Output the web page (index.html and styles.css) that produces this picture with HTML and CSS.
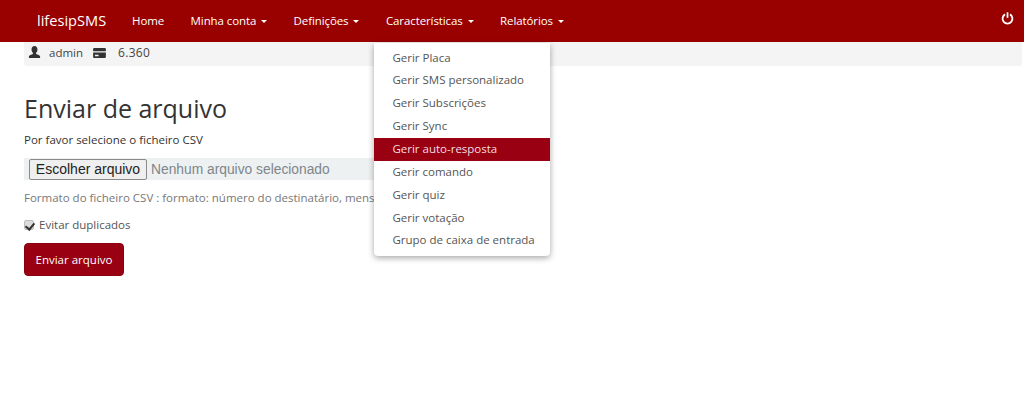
FILE: index.html
```html
<!DOCTYPE html>
<html lang="pt">
<head>
<meta charset="utf-8">
<title>Enviar de arquivo</title>
<link rel="stylesheet" href="styles.css">
</head>
<body>
<nav class="navbar">
  <a class="brand" href="#">lifesipSMS</a>
  <ul class="nav-list">
    <li><a href="#">Home</a></li>
    <li><a href="#">Minha conta <span class="caret"></span></a></li>
    <li><a href="#">Definições <span class="caret"></span></a></li>
    <li class="has-menu"><a href="#">Características <span class="caret"></span></a>
      <ul class="menu">
        <li><a href="#">Gerir Placa</a></li>
        <li><a href="#">Gerir SMS personalizado</a></li>
        <li><a href="#">Gerir Subscrições</a></li>
        <li><a href="#">Gerir Sync</a></li>
        <li><a class="active" href="#">Gerir auto-resposta</a></li>
        <li><a href="#">Gerir comando</a></li>
        <li><a href="#">Gerir quiz</a></li>
        <li><a href="#">Gerir votação</a></li>
        <li><a href="#">Grupo de caixa de entrada</a></li>
      </ul>
    </li>
    <li><a href="#">Relatórios <span class="caret"></span></a></li>
  </ul>
  <a class="power" href="#" aria-label="Sair">
    <svg viewBox="0 0 14 14" width="13" height="13"><path d="M4.300 2.600a5.300 5.300 0 1 0 5.400 0" fill="none" stroke="#fff" stroke-width="2"/><path d="M7 .3v6" fill="none" stroke="#fff" stroke-width="1.900"/></svg>
  </a>
</nav>
<main class="content">
  <div class="stats">
    <svg class="icon" viewBox="0 0 14 14" width="13" height="13"><path d="M7 0c2 0 3.200 1.500 3.200 3.700 0 1.500-.6 2.900-1.500 3.700v1.100c1.800.5 4.300 1.300 4.300 2.800V13H1v-1.700c0-1.500 2.500-2.300 4.300-2.800V7.400C4.400 6.600 3.800 5.200 3.800 3.700 3.800 1.500 5 0 7 0z" fill="#333"/></svg>
    <span class="stat-name">admin</span>
    <svg class="icon card" viewBox="0 0 14 11" width="13" height="10"><path d="M1 0h12a1 1 0 0 1 1 1v2.500H0V1a1 1 0 0 1 1-1zM0 5h14v5a1 1 0 0 1-1 1H1a1 1 0 0 1-1-1zm2 2.500V9h4V7.500z" fill="#333"/></svg>
    <span class="stat-value">6.360</span>
  </div>
  <h1>Enviar de arquivo</h1>
  <p class="label">Por favor selecione o ficheiro CSV</p>
  <div class="file-well">
    <button class="file-btn" type="button">Escolher arquivo</button>
    <span class="file-name">Nenhum arquivo selecionado</span>
  </div>
  <p class="help">Formato do ficheiro CSV : formato: número do destinatário, mensagem</p>
  <label class="check"><input type="checkbox" checked> Evitar duplicados</label>
  <button class="submit" type="button">Enviar arquivo</button>
</main>
</body>
</html>
```
FILE: styles.css
```css
* { box-sizing: border-box; }
html, body { min-height: 100%; }
body { margin: 0; min-height: 100vh; font-family: "Open Sans", "Liberation Sans", sans-serif; font-size: 11.5px; color: #333; background: #fff; }
a { text-decoration: none; color: inherit; }
ul { list-style: none; margin: 0; padding: 0; }
.navbar { display: flex; align-items: center; height: 42px; background: #990000; color: #fff; }
.brand { font-size: 14.6px; margin-left: 37px; width: 81.750px; padding-bottom: 2px; }
.nav-list { display: flex; flex: 1; }
.nav-list > li { position: relative; }
.nav-list > li > a { display: block; padding: 0 13.250px; line-height: 40px; white-space: nowrap; letter-spacing: -.1px; }
.caret { display: inline-block; width: 0; height: 0; margin-left: 2px; vertical-align: middle; border-top: 3px solid #fff; border-left: 3px solid transparent; border-right: 3px solid transparent; }
.power { margin: 0 10px 6px 0; display: flex; }
.menu { position: absolute; top: 42px; left: 1.750px; width: 176px; padding: 3.500px 0 4px; background: #fff; border-radius: 0 0 4px 4px; box-shadow: 0 2px 6px rgba(0,0,0,.35); z-index: 5; }
.menu a { display: block; padding: 0 18px; line-height: 22.860px; color: #555; white-space: nowrap; }
.menu a.active { background: #990012; color: #f3dfe2; }
.content { padding: 0 2px 0 24px; }
.stats { display: flex; align-items: center; height: 24px; background: #f4f4f4; padding: 0 0 3px 4px; color: #444; border-radius: 0 0 3px 3px; }
.stat-name { margin: 0 10px 0 8px; }
.stat-value { margin-left: 12px; letter-spacing: .3px; font-size: 12px; }
h1 { font-size: 25px; font-weight: 400; margin: 25px 0 7px; line-height: 34px; }
.label { margin: 0 0 11px; line-height: 15px; }
.file-well { display: flex; align-items: center; gap: 4px; width: 500px; height: 22px; padding-left: 5px; background: #eef1f1; font-family: "Liberation Sans", sans-serif; font-size: 14px; }
.file-btn { width: 118px; height: 21px; padding: 0; background: #efefef; color: #222; border: 1px solid #8a8a8a; border-radius: 2px; font: inherit; }
.file-name { color: #7d868c; white-space: nowrap; font-size: 13.800px; }
.help { margin: 10px 0 0; line-height: 16px; color: #777; white-space: nowrap; }
.check { display: flex; align-items: center; gap: 5px; margin-top: 11px; line-height: 16px; color: #555; }
.check input { appearance: none; position: relative; width: 10px; height: 10px; margin: 0 0 1px; background: #dcdcdc; border: 1px solid #bdbdbd; border-radius: 2px; }
.check input::after { content: ""; position: absolute; left: 2px; top: 0; width: 4px; height: 7px; border: solid #333; border-width: 0 2px 2px 0; transform: rotate(40deg); }
.submit { display: block; margin-top: 10px; width: 100px; height: 33px; background: #990012; color: #fff; border: 1px solid #8a0010; border-radius: 4px; font: inherit; }
```
